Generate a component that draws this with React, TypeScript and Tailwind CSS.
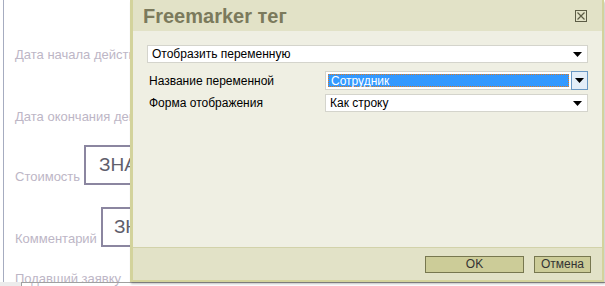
import React from 'react'

function Arrow() {
  return (
    <svg width="9" height="5" viewBox="0 0 9 5" className="shrink-0">
      <path d="M0 0h9L4.5 5z" fill="#000" />
    </svg>
  )
}

function Select({ value, grow }: { value: string; grow?: boolean }) {
  return (
    <div
      className={
        grow
          ? 'flex h-[18px] flex-1 items-center justify-between border border-[#d4d4cc] bg-white pl-[4px] pr-[5px]'
          : 'flex h-[18px] w-full shrink-0 items-center justify-between border border-[#d4d4cc] bg-white pl-[4px] pr-[5px]'
      }
    >
      <span className="leading-none">{value}</span>
      <Arrow />
    </div>
  )
}

export default function App() {
  return (
    <div className="relative h-[286px] w-[605px] overflow-hidden bg-white font-['Liberation_Sans',Arial,sans-serif] text-[13px] text-[#bdb6c6]">
      {/* page behind the dialog */}
      <div className="ml-[3px] h-[282px] border-l border-[#a6acc0] pl-[11px]">
        <div className="pt-[46px] leading-[18px]">Дата начала действия договора</div>
        <div className="mt-[44px] leading-[18px]">Дата окончания действия договора</div>
        <div className="mt-[19px] flex items-end gap-[4px]">
          <span className="leading-[16px]">Стоимость</span>
          <div className="flex h-[40px] w-[160px] items-center border-2 border-[#8b86a0] pl-[13px] text-[19px] text-[#5f5e6c]">ЗНАЧЕНИЕ</div>
        </div>
        <div className="mt-[22px] flex items-end gap-[4px]">
          <span className="leading-[16px]">Комментарий</span>
          <div className="flex h-[40px] w-[160px] items-center border-2 border-[#8b86a0] pl-[11px] text-[19px] text-[#5f5e6c]">ЗНАЧЕНИЕ</div>
        </div>
        <div className="mt-[24px] leading-[16px]">Подавший заявку</div>
      </div>
      <div className="flex h-[4px]">
        <div className="w-[21px] bg-[#ececec]" />
        <div className="flex-1 border-l border-t border-[#a0a0a0]" />
      </div>

      {/* dialog */}
      <div className="absolute left-[130px] top-0 flex h-[282px] w-[474px] flex-col border-b-2 border-l-[3px] border-r-2 border-[#d3d39c] text-[12px] text-black shadow-[1px_2px_2px_rgba(0,0,0,0.25)]">
        <div className="flex h-[31px] shrink-0 items-center justify-between bg-[#e2e2c7] pl-[10px] pr-[15px]">
          <span className="text-[20px] font-bold leading-none text-[#7b7a5c]">Freemarker тег</span>
          <svg width="12" height="12" viewBox="0 0 12 12">
            <rect x="0.5" y="0.5" width="11" height="11" fill="none" stroke="#5c5c45" />
            <path d="M2.5 2.5l7 7M9.5 2.5l-7 7" stroke="#5c5c45" strokeWidth="1.2" />
          </svg>
        </div>
        <div className="flex flex-1 flex-col gap-[4px] border-b border-[#d2d2aa] bg-[#efefe3] pl-[14px] pr-[14px] pt-[14px]">
          <Select value="Отобразить переменную" />
          <div className="mt-[4px] flex h-[19px] shrink-0 items-center">
            <span className="w-[178px] shrink-0 pl-[2px]">Название переменной</span>
            <div className="flex h-[19px] flex-1 items-center border border-[#d4d4cc] bg-white p-[2px]">
              <div className="flex h-[13px] flex-1 items-center border border-dotted border-[#e07a20] bg-[#3399ff] pl-[2px] text-white">Сотрудник</div>
              <div className="-mr-[3px] ml-[2px] flex h-[19px] w-[17px] items-center justify-center border border-[#6a98c4] bg-[#e4eef8]">
                <Arrow />
              </div>
            </div>
          </div>
          <div className="flex h-[18px] shrink-0 items-center">
            <span className="w-[178px] shrink-0 pl-[2px]">Форма отображения</span>
            <Select value="Как строку" grow />
          </div>
        </div>
        <div className="flex h-[32px] shrink-0 items-center justify-end gap-[10px] bg-[#e2e2c7] pr-[11px]">
          <button className="h-[17px] w-[99px] border border-[#77774f] bg-[#cccc98] text-[12px] leading-none text-[#333]">OK</button>
          <button className="h-[17px] w-[57px] border border-[#77774f] bg-[#cccc98] text-[12px] leading-none text-[#333]">Отмена</button>
        </div>
      </div>
    </div>
  )
}
